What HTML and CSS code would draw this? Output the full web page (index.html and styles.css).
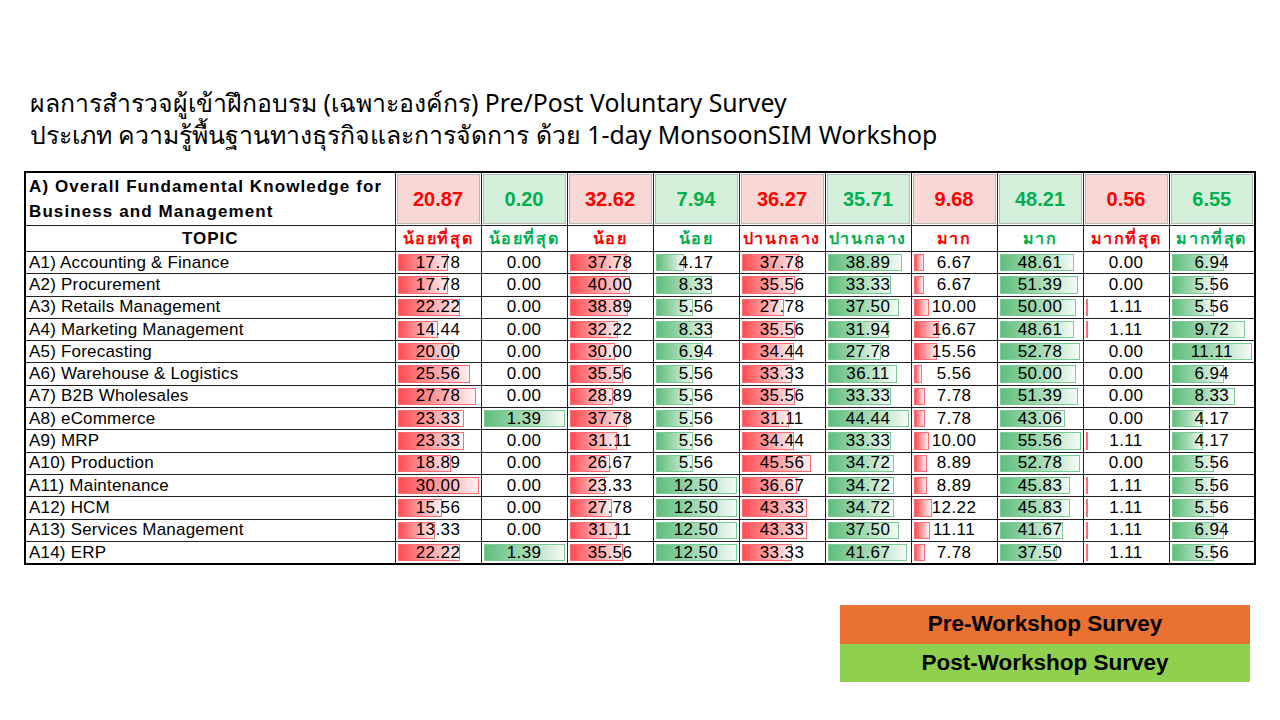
FILE: index.html
```html
<!DOCTYPE html>
<html lang="th">
<head>
<meta charset="utf-8">
<title>Pre/Post Voluntary Survey</title>
<link rel="stylesheet" href="styles.css">
</head>
<body>
<div class="page">
  <div class="title">
    <div>ผลการสำรวจผู้เข้าฝึกอบรม (เฉพาะองค์กร) Pre/Post Voluntary Survey</div>
    <div>ประเภท ความรู้พื้นฐานทางธุรกิจและการจัดการ ด้วย 1-day MonsoonSIM Workshop</div>
  </div>

  <table class="grid">
    <colgroup>
      <col class="c-topic">
      <col><col><col><col><col><col><col><col><col><col>
    </colgroup>
    <tr class="h1">
      <td class="topic-h">A) Overall Fundamental Knowledge for Business and Management</td>
      <td class="sum pre"><span>20.87</span></td>
      <td class="sum post"><span>0.20</span></td>
      <td class="sum pre"><span>32.62</span></td>
      <td class="sum post"><span>7.94</span></td>
      <td class="sum pre"><span>36.27</span></td>
      <td class="sum post"><span>35.71</span></td>
      <td class="sum pre"><span>9.68</span></td>
      <td class="sum post"><span>48.21</span></td>
      <td class="sum pre"><span>0.56</span></td>
      <td class="sum post"><span>6.55</span></td>
    </tr>
    <tr class="h2">
      <td class="topic-label">TOPIC</td>
      <td class="lbl pre">น้อยที่สุด</td>
      <td class="lbl post">น้อยที่สุด</td>
      <td class="lbl pre">น้อย</td>
      <td class="lbl post">น้อย</td>
      <td class="lbl pre">ปานกลาง</td>
      <td class="lbl post">ปานกลาง</td>
      <td class="lbl pre">มาก</td>
      <td class="lbl post">มาก</td>
      <td class="lbl pre">มากที่สุด</td>
      <td class="lbl post">มากที่สุด</td>
    </tr>

    <tr class="row">
      <td class="topic">A1) Accounting &amp; Finance</td>
      <td class="v r"><i class="bar" style="width:59.3%"></i><b>17.78</b></td>
      <td class="v g"><b>0.00</b></td>
      <td class="v r"><i class="bar" style="width:67.5%"></i><b>37.78</b></td>
      <td class="v g"><i class="bar" style="width:33.4%"></i><b>4.17</b></td>
      <td class="v r"><i class="bar" style="width:67.5%"></i><b>37.78</b></td>
      <td class="v g"><i class="bar" style="width:87.5%"></i><b>38.89</b></td>
      <td class="v r"><i class="bar" style="width:11.9%"></i><b>6.67</b></td>
      <td class="v g"><i class="bar" style="width:87.5%"></i><b>48.61</b></td>
      <td class="v r"><b>0.00</b></td>
      <td class="v g"><i class="bar" style="width:62.5%"></i><b>6.94</b></td>
    </tr>
    <tr class="row">
      <td class="topic">A2) Procurement</td>
      <td class="v r"><i class="bar" style="width:59.3%"></i><b>17.78</b></td>
      <td class="v g"><b>0.00</b></td>
      <td class="v r"><i class="bar" style="width:71.4%"></i><b>40.00</b></td>
      <td class="v g"><i class="bar" style="width:66.6%"></i><b>8.33</b></td>
      <td class="v r"><i class="bar" style="width:63.5%"></i><b>35.56</b></td>
      <td class="v g"><i class="bar" style="width:75%"></i><b>33.33</b></td>
      <td class="v r"><i class="bar" style="width:11.9%"></i><b>6.67</b></td>
      <td class="v g"><i class="bar" style="width:92.5%"></i><b>51.39</b></td>
      <td class="v r"><b>0.00</b></td>
      <td class="v g"><i class="bar" style="width:50%"></i><b>5.56</b></td>
    </tr>
    <tr class="row">
      <td class="topic">A3) Retails Management</td>
      <td class="v r"><i class="bar" style="width:74.1%"></i><b>22.22</b></td>
      <td class="v g"><b>0.00</b></td>
      <td class="v r"><i class="bar" style="width:69.4%"></i><b>38.89</b></td>
      <td class="v g"><i class="bar" style="width:44.5%"></i><b>5.56</b></td>
      <td class="v r"><i class="bar" style="width:49.6%"></i><b>27.78</b></td>
      <td class="v g"><i class="bar" style="width:84.4%"></i><b>37.50</b></td>
      <td class="v r"><i class="bar" style="width:17.9%"></i><b>10.00</b></td>
      <td class="v g"><i class="bar" style="width:90%"></i><b>50.00</b></td>
      <td class="v r"><i class="bar" style="width:2%"></i><b>1.11</b></td>
      <td class="v g"><i class="bar" style="width:50%"></i><b>5.56</b></td>
    </tr>
    <tr class="row">
      <td class="topic">A4) Marketing Management</td>
      <td class="v r"><i class="bar" style="width:48.1%"></i><b>14.44</b></td>
      <td class="v g"><b>0.00</b></td>
      <td class="v r"><i class="bar" style="width:57.5%"></i><b>32.22</b></td>
      <td class="v g"><i class="bar" style="width:66.6%"></i><b>8.33</b></td>
      <td class="v r"><i class="bar" style="width:63.5%"></i><b>35.56</b></td>
      <td class="v g"><i class="bar" style="width:71.9%"></i><b>31.94</b></td>
      <td class="v r"><i class="bar" style="width:29.8%"></i><b>16.67</b></td>
      <td class="v g"><i class="bar" style="width:87.5%"></i><b>48.61</b></td>
      <td class="v r"><i class="bar" style="width:2%"></i><b>1.11</b></td>
      <td class="v g"><i class="bar" style="width:87.5%"></i><b>9.72</b></td>
    </tr>
    <tr class="row">
      <td class="topic">A5) Forecasting</td>
      <td class="v r"><i class="bar" style="width:66.7%"></i><b>20.00</b></td>
      <td class="v g"><b>0.00</b></td>
      <td class="v r"><i class="bar" style="width:53.6%"></i><b>30.00</b></td>
      <td class="v g"><i class="bar" style="width:55.5%"></i><b>6.94</b></td>
      <td class="v r"><i class="bar" style="width:61.5%"></i><b>34.44</b></td>
      <td class="v g"><i class="bar" style="width:62.5%"></i><b>27.78</b></td>
      <td class="v r"><i class="bar" style="width:27.8%"></i><b>15.56</b></td>
      <td class="v g"><i class="bar" style="width:95%"></i><b>52.78</b></td>
      <td class="v r"><b>0.00</b></td>
      <td class="v g"><i class="bar" style="width:100%"></i><b>11.11</b></td>
    </tr>
    <tr class="row">
      <td class="topic">A6) Warehouse &amp; Logistics</td>
      <td class="v r"><i class="bar" style="width:85.2%"></i><b>25.56</b></td>
      <td class="v g"><b>0.00</b></td>
      <td class="v r"><i class="bar" style="width:63.5%"></i><b>35.56</b></td>
      <td class="v g"><i class="bar" style="width:44.5%"></i><b>5.56</b></td>
      <td class="v r"><i class="bar" style="width:59.5%"></i><b>33.33</b></td>
      <td class="v g"><i class="bar" style="width:81.3%"></i><b>36.11</b></td>
      <td class="v r"><i class="bar" style="width:9.9%"></i><b>5.56</b></td>
      <td class="v g"><i class="bar" style="width:90%"></i><b>50.00</b></td>
      <td class="v r"><b>0.00</b></td>
      <td class="v g"><i class="bar" style="width:62.5%"></i><b>6.94</b></td>
    </tr>
    <tr class="row">
      <td class="topic">A7) B2B Wholesales</td>
      <td class="v r"><i class="bar" style="width:92.6%"></i><b>27.78</b></td>
      <td class="v g"><b>0.00</b></td>
      <td class="v r"><i class="bar" style="width:51.6%"></i><b>28.89</b></td>
      <td class="v g"><i class="bar" style="width:44.5%"></i><b>5.56</b></td>
      <td class="v r"><i class="bar" style="width:63.5%"></i><b>35.56</b></td>
      <td class="v g"><i class="bar" style="width:75%"></i><b>33.33</b></td>
      <td class="v r"><i class="bar" style="width:13.9%"></i><b>7.78</b></td>
      <td class="v g"><i class="bar" style="width:92.5%"></i><b>51.39</b></td>
      <td class="v r"><b>0.00</b></td>
      <td class="v g"><i class="bar" style="width:75%"></i><b>8.33</b></td>
    </tr>
    <tr class="row">
      <td class="topic">A8) eCommerce</td>
      <td class="v r"><i class="bar" style="width:77.8%"></i><b>23.33</b></td>
      <td class="v g"><i class="bar" style="width:100%"></i><b>1.39</b></td>
      <td class="v r"><i class="bar" style="width:67.5%"></i><b>37.78</b></td>
      <td class="v g"><i class="bar" style="width:44.5%"></i><b>5.56</b></td>
      <td class="v r"><i class="bar" style="width:55.6%"></i><b>31.11</b></td>
      <td class="v g"><i class="bar" style="width:100%"></i><b>44.44</b></td>
      <td class="v r"><i class="bar" style="width:13.9%"></i><b>7.78</b></td>
      <td class="v g"><i class="bar" style="width:77.5%"></i><b>43.06</b></td>
      <td class="v r"><b>0.00</b></td>
      <td class="v g"><i class="bar" style="width:37.5%"></i><b>4.17</b></td>
    </tr>
    <tr class="row">
      <td class="topic">A9) MRP</td>
      <td class="v r"><i class="bar" style="width:77.8%"></i><b>23.33</b></td>
      <td class="v g"><b>0.00</b></td>
      <td class="v r"><i class="bar" style="width:55.6%"></i><b>31.11</b></td>
      <td class="v g"><i class="bar" style="width:44.5%"></i><b>5.56</b></td>
      <td class="v r"><i class="bar" style="width:61.5%"></i><b>34.44</b></td>
      <td class="v g"><i class="bar" style="width:75%"></i><b>33.33</b></td>
      <td class="v r"><i class="bar" style="width:17.9%"></i><b>10.00</b></td>
      <td class="v g"><i class="bar" style="width:100%"></i><b>55.56</b></td>
      <td class="v r"><i class="bar" style="width:2%"></i><b>1.11</b></td>
      <td class="v g"><i class="bar" style="width:37.5%"></i><b>4.17</b></td>
    </tr>
    <tr class="row">
      <td class="topic">A10) Production</td>
      <td class="v r"><i class="bar" style="width:63%"></i><b>18.89</b></td>
      <td class="v g"><b>0.00</b></td>
      <td class="v r"><i class="bar" style="width:47.6%"></i><b>26.67</b></td>
      <td class="v g"><i class="bar" style="width:44.5%"></i><b>5.56</b></td>
      <td class="v r"><i class="bar" style="width:81.4%"></i><b>45.56</b></td>
      <td class="v g"><i class="bar" style="width:78.1%"></i><b>34.72</b></td>
      <td class="v r"><i class="bar" style="width:15.9%"></i><b>8.89</b></td>
      <td class="v g"><i class="bar" style="width:95%"></i><b>52.78</b></td>
      <td class="v r"><b>0.00</b></td>
      <td class="v g"><i class="bar" style="width:50%"></i><b>5.56</b></td>
    </tr>
    <tr class="row">
      <td class="topic">A11) Maintenance</td>
      <td class="v r"><i class="bar" style="width:100%"></i><b>30.00</b></td>
      <td class="v g"><b>0.00</b></td>
      <td class="v r"><i class="bar" style="width:41.7%"></i><b>23.33</b></td>
      <td class="v g"><i class="bar" style="width:100%"></i><b>12.50</b></td>
      <td class="v r"><i class="bar" style="width:65.5%"></i><b>36.67</b></td>
      <td class="v g"><i class="bar" style="width:78.1%"></i><b>34.72</b></td>
      <td class="v r"><i class="bar" style="width:15.9%"></i><b>8.89</b></td>
      <td class="v g"><i class="bar" style="width:82.5%"></i><b>45.83</b></td>
      <td class="v r"><i class="bar" style="width:2%"></i><b>1.11</b></td>
      <td class="v g"><i class="bar" style="width:50%"></i><b>5.56</b></td>
    </tr>
    <tr class="row">
      <td class="topic">A12) HCM</td>
      <td class="v r"><i class="bar" style="width:51.9%"></i><b>15.56</b></td>
      <td class="v g"><b>0.00</b></td>
      <td class="v r"><i class="bar" style="width:49.6%"></i><b>27.78</b></td>
      <td class="v g"><i class="bar" style="width:100%"></i><b>12.50</b></td>
      <td class="v r"><i class="bar" style="width:77.4%"></i><b>43.33</b></td>
      <td class="v g"><i class="bar" style="width:78.1%"></i><b>34.72</b></td>
      <td class="v r"><i class="bar" style="width:21.8%"></i><b>12.22</b></td>
      <td class="v g"><i class="bar" style="width:82.5%"></i><b>45.83</b></td>
      <td class="v r"><i class="bar" style="width:2%"></i><b>1.11</b></td>
      <td class="v g"><i class="bar" style="width:50%"></i><b>5.56</b></td>
    </tr>
    <tr class="row">
      <td class="topic">A13) Services Management</td>
      <td class="v r"><i class="bar" style="width:44.4%"></i><b>13.33</b></td>
      <td class="v g"><b>0.00</b></td>
      <td class="v r"><i class="bar" style="width:55.6%"></i><b>31.11</b></td>
      <td class="v g"><i class="bar" style="width:100%"></i><b>12.50</b></td>
      <td class="v r"><i class="bar" style="width:77.4%"></i><b>43.33</b></td>
      <td class="v g"><i class="bar" style="width:84.4%"></i><b>37.50</b></td>
      <td class="v r"><i class="bar" style="width:19.8%"></i><b>11.11</b></td>
      <td class="v g"><i class="bar" style="width:75%"></i><b>41.67</b></td>
      <td class="v r"><i class="bar" style="width:2%"></i><b>1.11</b></td>
      <td class="v g"><i class="bar" style="width:62.5%"></i><b>6.94</b></td>
    </tr>
    <tr class="row">
      <td class="topic">A14) ERP</td>
      <td class="v r"><i class="bar" style="width:74.1%"></i><b>22.22</b></td>
      <td class="v g"><i class="bar" style="width:100%"></i><b>1.39</b></td>
      <td class="v r"><i class="bar" style="width:63.5%"></i><b>35.56</b></td>
      <td class="v g"><i class="bar" style="width:100%"></i><b>12.50</b></td>
      <td class="v r"><i class="bar" style="width:59.5%"></i><b>33.33</b></td>
      <td class="v g"><i class="bar" style="width:93.8%"></i><b>41.67</b></td>
      <td class="v r"><i class="bar" style="width:13.9%"></i><b>7.78</b></td>
      <td class="v g"><i class="bar" style="width:67.5%"></i><b>37.50</b></td>
      <td class="v r"><i class="bar" style="width:2%"></i><b>1.11</b></td>
      <td class="v g"><i class="bar" style="width:50%"></i><b>5.56</b></td>
    </tr>
  </table>

  <div class="legend-wrap">
    <div class="legend">
      <div class="leg pre-leg">Pre-Workshop Survey</div>
      <div class="leg post-leg">Post-Workshop Survey</div>
    </div>
  </div>
</div>
</body>
</html>
```

FILE: styles.css
```css
html, body {
  margin: 0;
  padding: 0;
  background: #ffffff;
}

.page {
  width: 1280px;
  height: 720px;
  overflow: hidden;
  padding-top: 86px;
  box-sizing: border-box;
}

.title {
  margin-left: 30px;
  font-family: "Noto Sans", "Open Sans", sans-serif;
  font-size: 24.8px;
  line-height: 32px;
  color: #000;
}

.grid {
  margin-top: 21px;
  margin-left: 24px;
  width: 1232px;
  border-collapse: collapse;
  table-layout: fixed;
  border: 2px solid #000;
  font-family: "Liberation Sans", Arial, sans-serif;
  color: #000;
}

.c-topic {
  width: 370px;
}

.grid td {
  border: 1px solid #222;
  padding: 0;
}

.h1 td {
  height: 52px;
}

.topic-h {
  font-weight: bold;
  font-size: 17px;
  letter-spacing: 1.1px;
  line-height: 25px;
  padding: 0 3px !important;
  vertical-align: middle;
}

.sum {
  text-align: center;
  vertical-align: middle;
  font-weight: bold;
  font-size: 20px;
  box-shadow: inset 0 0 0 1px #ffffff, inset 0 0 0 2px #b8b8b8;
}

.sum.pre {
  background: #f8d8d5;
  color: #ff0000;
}

.sum.post {
  background: #d5f0da;
  color: #00b050;
}

.h2 td {
  height: 20px;
  text-align: center;
  font-weight: bold;
}

.topic-label {
  font-size: 17px;
  letter-spacing: 1px;
}

.lbl {
  font-family: "Liberation Sans", "Noto Sans", sans-serif;
  font-size: 16px;
  letter-spacing: 1.6px;
  white-space: nowrap;
  overflow: hidden;
}

.lbl.pre {
  color: #ff0000;
}

.lbl.post {
  color: #00b050;
}

.row td {
  height: 21.3px;
  font-size: 17px;
  line-height: 20px;
}

.topic {
  padding-left: 3px !important;
  white-space: nowrap;
  letter-spacing: 0.2px;
}

.v {
  position: relative;
  text-align: center;
}

.v b {
  position: relative;
  font-weight: normal;
  letter-spacing: 0.4px;
}

.bar {
  position: absolute;
  left: 2px;
  top: 2px;
  bottom: 2px;
  max-width: calc(100% - 4px);
  box-sizing: border-box;
}

.v.r .bar {
  background: linear-gradient(to right, #ff4d52 0%, #ff9599 45%, #fff2f2 100%);
  border: 1px solid #ff6b70;
}

.v.g .bar {
  background: linear-gradient(to right, #5fbe7d 0%, #a3d9b2 50%, #f4fbf6 100%);
  border: 1px solid #7ccb94;
}

.legend-wrap {
  display: flex;
  justify-content: flex-end;
  padding-right: 30px;
  margin-top: 40px;
}

.legend {
  width: 410px;
  font-family: "Liberation Sans", Arial, sans-serif;
  font-weight: bold;
  font-size: 22.5px;
  color: #000;
}

.leg {
  height: 38.5px;
  display: flex;
  align-items: center;
  justify-content: center;
}

.pre-leg {
  background: #e97132;
}

.post-leg {
  background: #8fd14f;
}
```
